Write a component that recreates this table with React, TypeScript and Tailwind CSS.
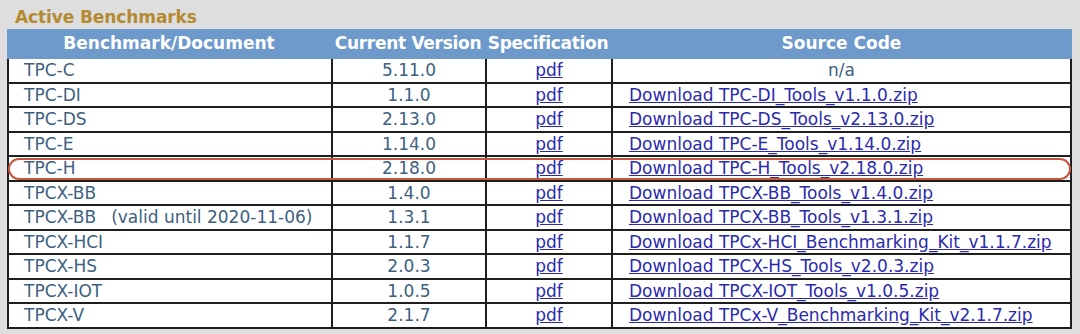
const rows: {
  name: string;
  note?: string;
  version: string;
  source: string | null;
  highlight?: boolean;
}[] = [
  { name: "TPC-C", version: "5.11.0", source: null },
  { name: "TPC-DI", version: "1.1.0", source: "Download TPC-DI_Tools_v1.1.0.zip" },
  { name: "TPC-DS", version: "2.13.0", source: "Download TPC-DS_Tools_v2.13.0.zip" },
  { name: "TPC-E", version: "1.14.0", source: "Download TPC-E_Tools_v1.14.0.zip" },
  { name: "TPC-H", version: "2.18.0", source: "Download TPC-H_Tools_v2.18.0.zip", highlight: true },
  { name: "TPCX-BB", version: "1.4.0", source: "Download TPCX-BB_Tools_v1.4.0.zip" },
  { name: "TPCX-BB", note: "(valid until 2020-11-06)", version: "1.3.1", source: "Download TPCX-BB_Tools_v1.3.1.zip" },
  { name: "TPCX-HCI", version: "1.1.7", source: "Download TPCx-HCI_Benchmarking_Kit_v1.1.7.zip" },
  { name: "TPCX-HS", version: "2.0.3", source: "Download TPCX-HS_Tools_v2.0.3.zip" },
  { name: "TPCX-IOT", version: "1.0.5", source: "Download TPCX-IOT_Tools_v1.0.5.zip" },
  { name: "TPCX-V", version: "2.1.7", source: "Download TPCx-V_Benchmarking_Kit_v2.1.7.zip" },
];

const cols = "grid grid-cols-[324px_154px_126px_1fr]";

export default function App() {
  return (
    <div
      className="w-[1080px] h-[334px] bg-[#dedede] pl-[7px] pr-[8px] pt-[6px] text-[17px]"
      style={{ fontFamily: '"DejaVu Sans", Verdana, sans-serif' }}
    >
      <h2 className="pl-[8px] h-[23px] leading-[23px] font-bold text-[#b48a30] tracking-[-0.1px]">
        Active Benchmarks
      </h2>

      <div className={`${cols} h-[30px] bg-[#6d9acb] font-bold text-white items-center`}>
        <div className="text-center">Benchmark/Document</div>
        <div className="text-center whitespace-nowrap tracking-[-0.3px]">Current Version</div>
        <div className="text-center whitespace-nowrap tracking-[-0.3px]">Specification</div>
        <div className="text-center">Source Code</div>
      </div>

      <div className="border-x-2 border-[#1e1e1e] bg-white">
        {rows.map((r, i) => (
          <div
            key={i}
            className={`${cols} relative h-[24.5px] border-b-2 border-[#1e1e1e] leading-[22px] text-[#3d5f80]`}
          >
            <div className="border-r-2 border-[#1e1e1e] pl-[15px] whitespace-nowrap">
              {r.name}
              {r.note && <span className="ml-[15px]">{r.note}</span>}
            </div>
            <div className="border-r-2 border-[#1e1e1e] text-center">{r.version}</div>
            <div className="border-r-2 border-[#1e1e1e] text-center">
              <a href="#" className="text-[#2a2aae] underline">pdf</a>
            </div>
            <div className={r.source ? "pl-[16px] whitespace-nowrap" : "text-center"}>
              {r.source ? (
                <a href="#" className="text-[#2a2aae] underline">{r.source}</a>
              ) : (
                "n/a"
              )}
            </div>
            {r.highlight && (
              <div className="absolute left-[-1px] right-[-1px] top-[1px] bottom-[0px] rounded-full border-2 border-[#c8553d] pointer-events-none" />
            )}
          </div>
        ))}
      </div>
    </div>
  );
}
